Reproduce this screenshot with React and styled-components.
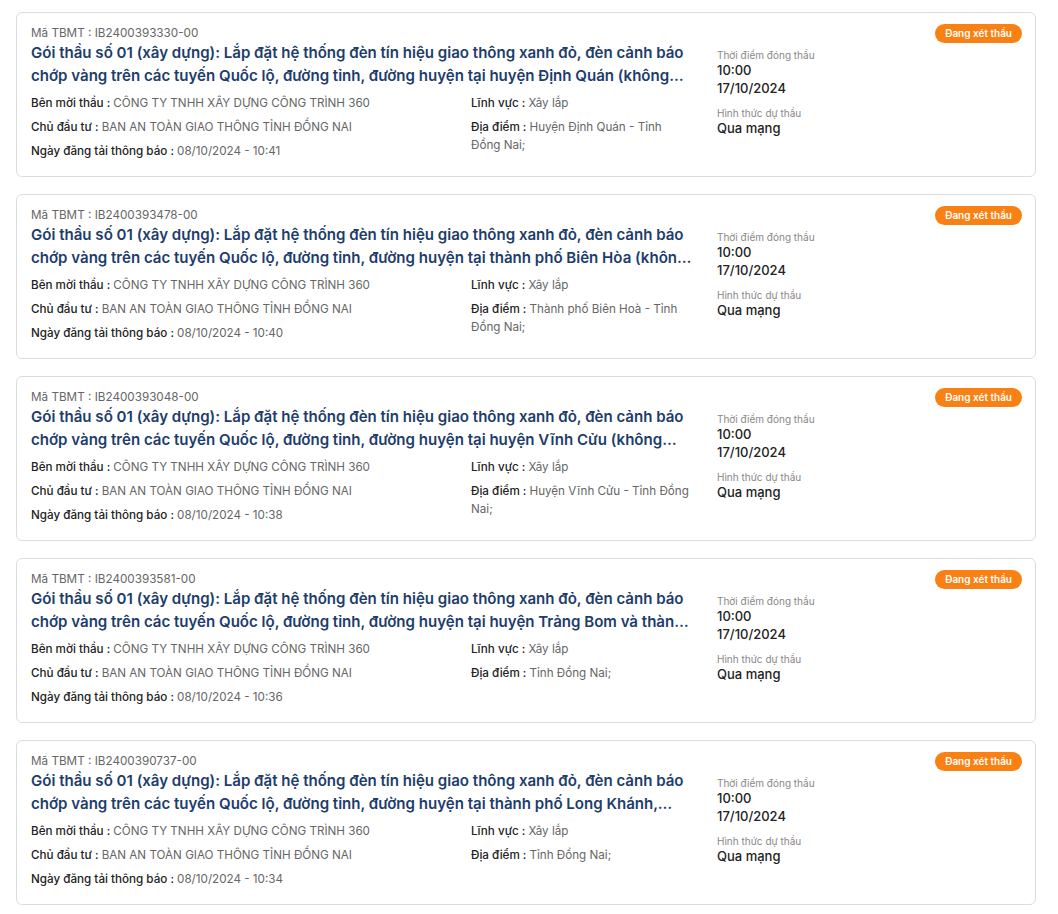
import React from "react";
import styled, { createGlobalStyle } from "styled-components";

const Global = createGlobalStyle`
  html, body { margin: 0; padding: 0; background: #fff; }
  body { font-family: Inter, "Noto Sans", sans-serif; color: #222; }
`;

const List = styled.div`
  display: flex;
  flex-direction: column;
  gap: 17px;
  padding: 12px 22px 12px 16px;
`;

const Card = styled.div`
  border: 1px solid #dcdcdc;
  border-radius: 6px;
  padding: 11px 13px 16px 14px;
  display: grid;
  grid-template-columns: 662px 1fr;
  column-gap: 24px;
  background: #fff;
`;

const Main = styled.div`
  min-width: 0;
`;

const Code = styled.div`
  font-size: 11.7px;
  line-height: 18px;
  color: #666;
`;

const Title = styled.div`
  font-size: 15.05px;
  line-height: 22.5px;
  font-weight: 600;
  color: #1d3d6b;
  display: -webkit-box;
  -webkit-line-clamp: 2;
  -webkit-box-orient: vertical;
  overflow: hidden;
  margin-bottom: 7px;
`;

const Info = styled.div`
  display: grid;
  grid-template-columns: 440px 1fr;
  row-gap: 6px;
`;

const Field = styled.div`
  font-size: 11.65px;
  line-height: 18px;
  color: #666;
  grid-column: ${(p) => p.$col};
  grid-row: ${(p) => p.$row};
`;

const Label = styled.span`
  font-weight: 500;
  color: #222;
`;

const Side = styled.div`
  display: flex;
  flex-direction: column;
  align-items: flex-start;
`;

const Badge = styled.div`
  align-self: flex-end;
  height: 19px;
  padding: 0 10px;
  border-radius: 10px;
  background: #f98012;
  color: #fff;
  font-size: 10px;
  font-weight: 600;
  line-height: 19px;
  margin-bottom: 6px;
`;

const SideLabel = styled.div`
  font-size: 10px;
  line-height: 13px;
  color: #888;
`;

const SideValue = styled.div`
  font-size: 13px;
  line-height: 17.6px;
  font-weight: 500;
  color: #222;
  margin-bottom: ${(p) => (p.$last ? "10px" : "0")};
`;

const PREFIX =
  "Gói thầu số 01 (xây dựng): Lắp đặt hệ thống đèn tín hiệu giao thông xanh đỏ, đèn cảnh báo chớp vàng trên các tuyến Quốc lộ, đường tỉnh, đường huyện tại ";

const items = [
  {
    code: "IB2400393330-00",
    place: "huyện Định Quán (không bao gồm các tuyến đường đô thị)",
    loc: "Huyện Định Quán - Tỉnh Đồng Nai;",
    time: "10:41",
  },
  {
    code: "IB2400393478-00",
    place: "thành phố Biên Hòa (không bao gồm các tuyến đường đô thị)",
    loc: "Thành phố Biên Hoà - Tỉnh Đồng Nai;",
    time: "10:40",
  },
  {
    code: "IB2400393048-00",
    place: "huyện Vĩnh Cửu (không bao gồm các tuyến đường đô thị)",
    loc: "Huyện Vĩnh Cửu - Tỉnh Đồng Nai;",
    time: "10:38",
  },
  {
    code: "IB2400393581-00",
    place: "huyện Trảng Bom và thành phố Long Khánh",
    loc: "Tỉnh Đồng Nai;",
    time: "10:36",
  },
  {
    code: "IB2400390737-00",
    place: "thành phố Long Khánh, huyện Xuân Lộc và huyện Cẩm Mỹ",
    loc: "Tỉnh Đồng Nai;",
    time: "10:34",
  },
];

function TenderCard({ item }) {
  return (
    <Card>
      <Main>
        <Code>Mã TBMT : {item.code}</Code>
        <Title>{PREFIX + item.place}</Title>
        <Info>
          <Field $col={1} $row={1}>
            <Label>Bên mời thầu : </Label>CÔNG TY TNHH XÂY DỰNG CÔNG TRÌNH 360
          </Field>
          <Field $col={2} $row={1}>
            <Label>Lĩnh vực : </Label>Xây lắp
          </Field>
          <Field $col={1} $row={2}>
            <Label>Chủ đầu tư : </Label>BAN AN TOÀN GIAO THÔNG TỈNH ĐỒNG NAI
          </Field>
          <Field $col={2} $row="2 / span 2">
            <Label>Địa điểm : </Label>
            {item.loc}
          </Field>
          <Field $col={1} $row={3}>
            <Label>Ngày đăng tải thông báo : </Label>08/10/2024 - {item.time}
          </Field>
        </Info>
      </Main>
      <Side>
        <Badge>Đang xét thầu</Badge>
        <SideLabel>Thời điểm đóng thầu</SideLabel>
        <SideValue>10:00</SideValue>
        <SideValue $last>17/10/2024</SideValue>
        <SideLabel>Hình thức dự thầu</SideLabel>
        <SideValue>Qua mạng</SideValue>
      </Side>
    </Card>
  );
}

export default function App() {
  return (
    <>
      <Global />
      <List>
        {items.map((it) => (
          <TenderCard key={it.code} item={it} />
        ))}
      </List>
    </>
  );
}
